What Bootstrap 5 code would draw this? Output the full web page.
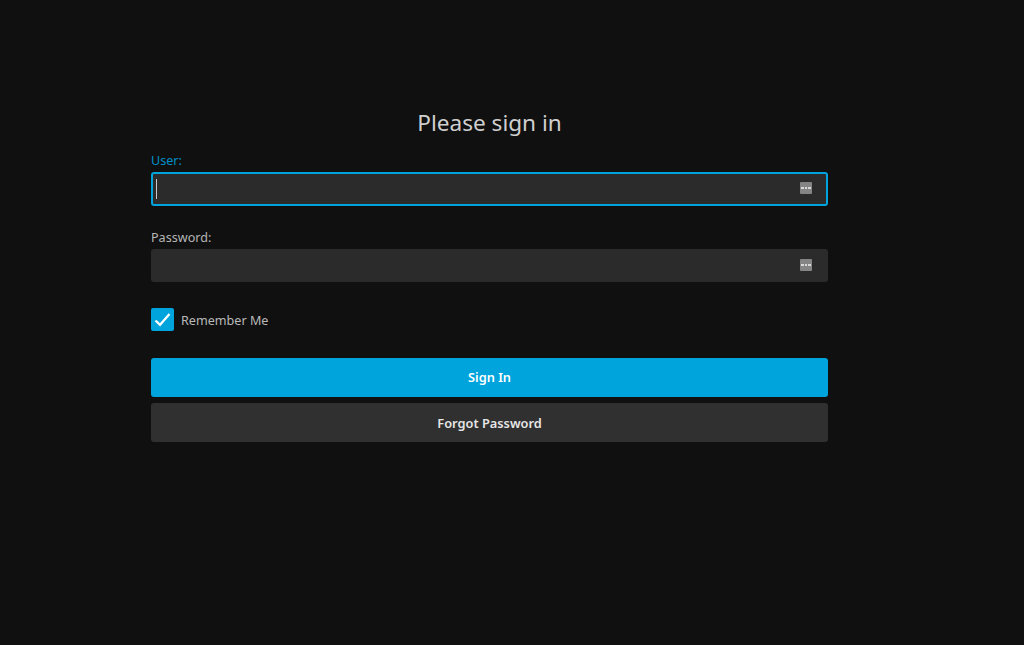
<!doctype html>
<html lang="en"><head><meta charset="utf-8"><title>Please sign in</title>
<link rel="stylesheet" href="https://cdn.jsdelivr.net/npm/bootstrap@5.3.0/dist/css/bootstrap.min.css">
<style>
html,body{height:100%}
body{background:#101010;color:#c8c8c8;font-family:"Noto Sans",sans-serif;font-size:12.6px;overflow:hidden}
.signin-box{width:677px;margin-left:151px;padding-top:107px}
.signin-title{font-size:22.6px;font-weight:400;line-height:31px;color:#cfcfcf;text-align:center;margin:0 0 14px}
.fld-label{display:block;font-size:12.6px;line-height:17px;margin-bottom:3px;color:#b5b5b5}
.fld-label.on{color:#0090c8}
.fld-wrap{margin-bottom:23px}
.fld-wrap+.fld-wrap{margin-bottom:26px}
.fld-input,.fld-input:focus{height:33px;background:#2b2b2b;border:0;border-radius:3px;color:#ddd;box-shadow:none;caret-color:transparent}
.fld-input.on,.fld-input.on:focus{height:34px;border:2px solid #00a4dc;background:#2b2b2b;box-shadow:none}
.fld-caret{position:absolute;left:5px;top:7px;width:1px;height:20px;background:#c8c8c8}
.fld-key{position:absolute;right:16px;top:10px;width:12px;height:12px;background:#858585;border-radius:1px;display:flex;align-items:center;justify-content:center;gap:1px}
.fld-key i{display:block;width:2.5px;height:2.5px;background:#d8d8d8}
.chk-row{height:23px;margin-bottom:27px;gap:7px}
.chk-box{width:23px;height:23px;border-radius:2px;background:#00a4dc}
.chk-text{font-size:12.6px;color:#b9b9b9;padding-top:3px}
.act-btn{height:39px;width:100%;border:0;border-radius:3px;font-size:12.8px;font-weight:600;line-height:1;margin-bottom:6px}
.act-primary,.act-primary:hover{background:#00a4dc;color:#fff}
.act-dark,.act-dark:hover{background:#303030;color:#e6e6e6;padding-top:8px}
</style></head>
<body>
<form class="signin-box" onsubmit="return false">
  <h1 class="signin-title">Please sign in</h1>
  <div class="fld-wrap">
    <label class="fld-label on" for="u">User:</label>
    <div class="position-relative">
      <input id="u" class="form-control fld-input on" type="text" autocomplete="off">
      <span class="fld-caret"></span>
      <span class="fld-key"><i></i><i></i><i></i></span>
    </div>
  </div>
  <div class="fld-wrap">
    <label class="fld-label" for="p">Password:</label>
    <div class="position-relative">
      <input id="p" class="form-control fld-input" type="password" autocomplete="off">
      <span class="fld-key"><i></i><i></i><i></i></span>
    </div>
  </div>
  <div class="chk-row d-flex align-items-center">
    <span class="chk-box d-flex align-items-center justify-content-center">
      <svg width="17" height="14" viewBox="0 0 17 14" fill="none" stroke="#fff" stroke-width="2.2"><path d="M1.5 7.5 6 11.8 15.5 1"/></svg>
    </span>
    <span class="chk-text">Remember Me</span>
  </div>
  <button class="btn act-btn act-primary d-block" type="submit">Sign In</button>
  <button class="btn act-btn act-dark d-block" type="button">Forgot Password</button>
</form>
<script src="https://cdn.jsdelivr.net/npm/bootstrap@5.3.0/dist/js/bootstrap.bundle.min.js"></script>
</body></html>
